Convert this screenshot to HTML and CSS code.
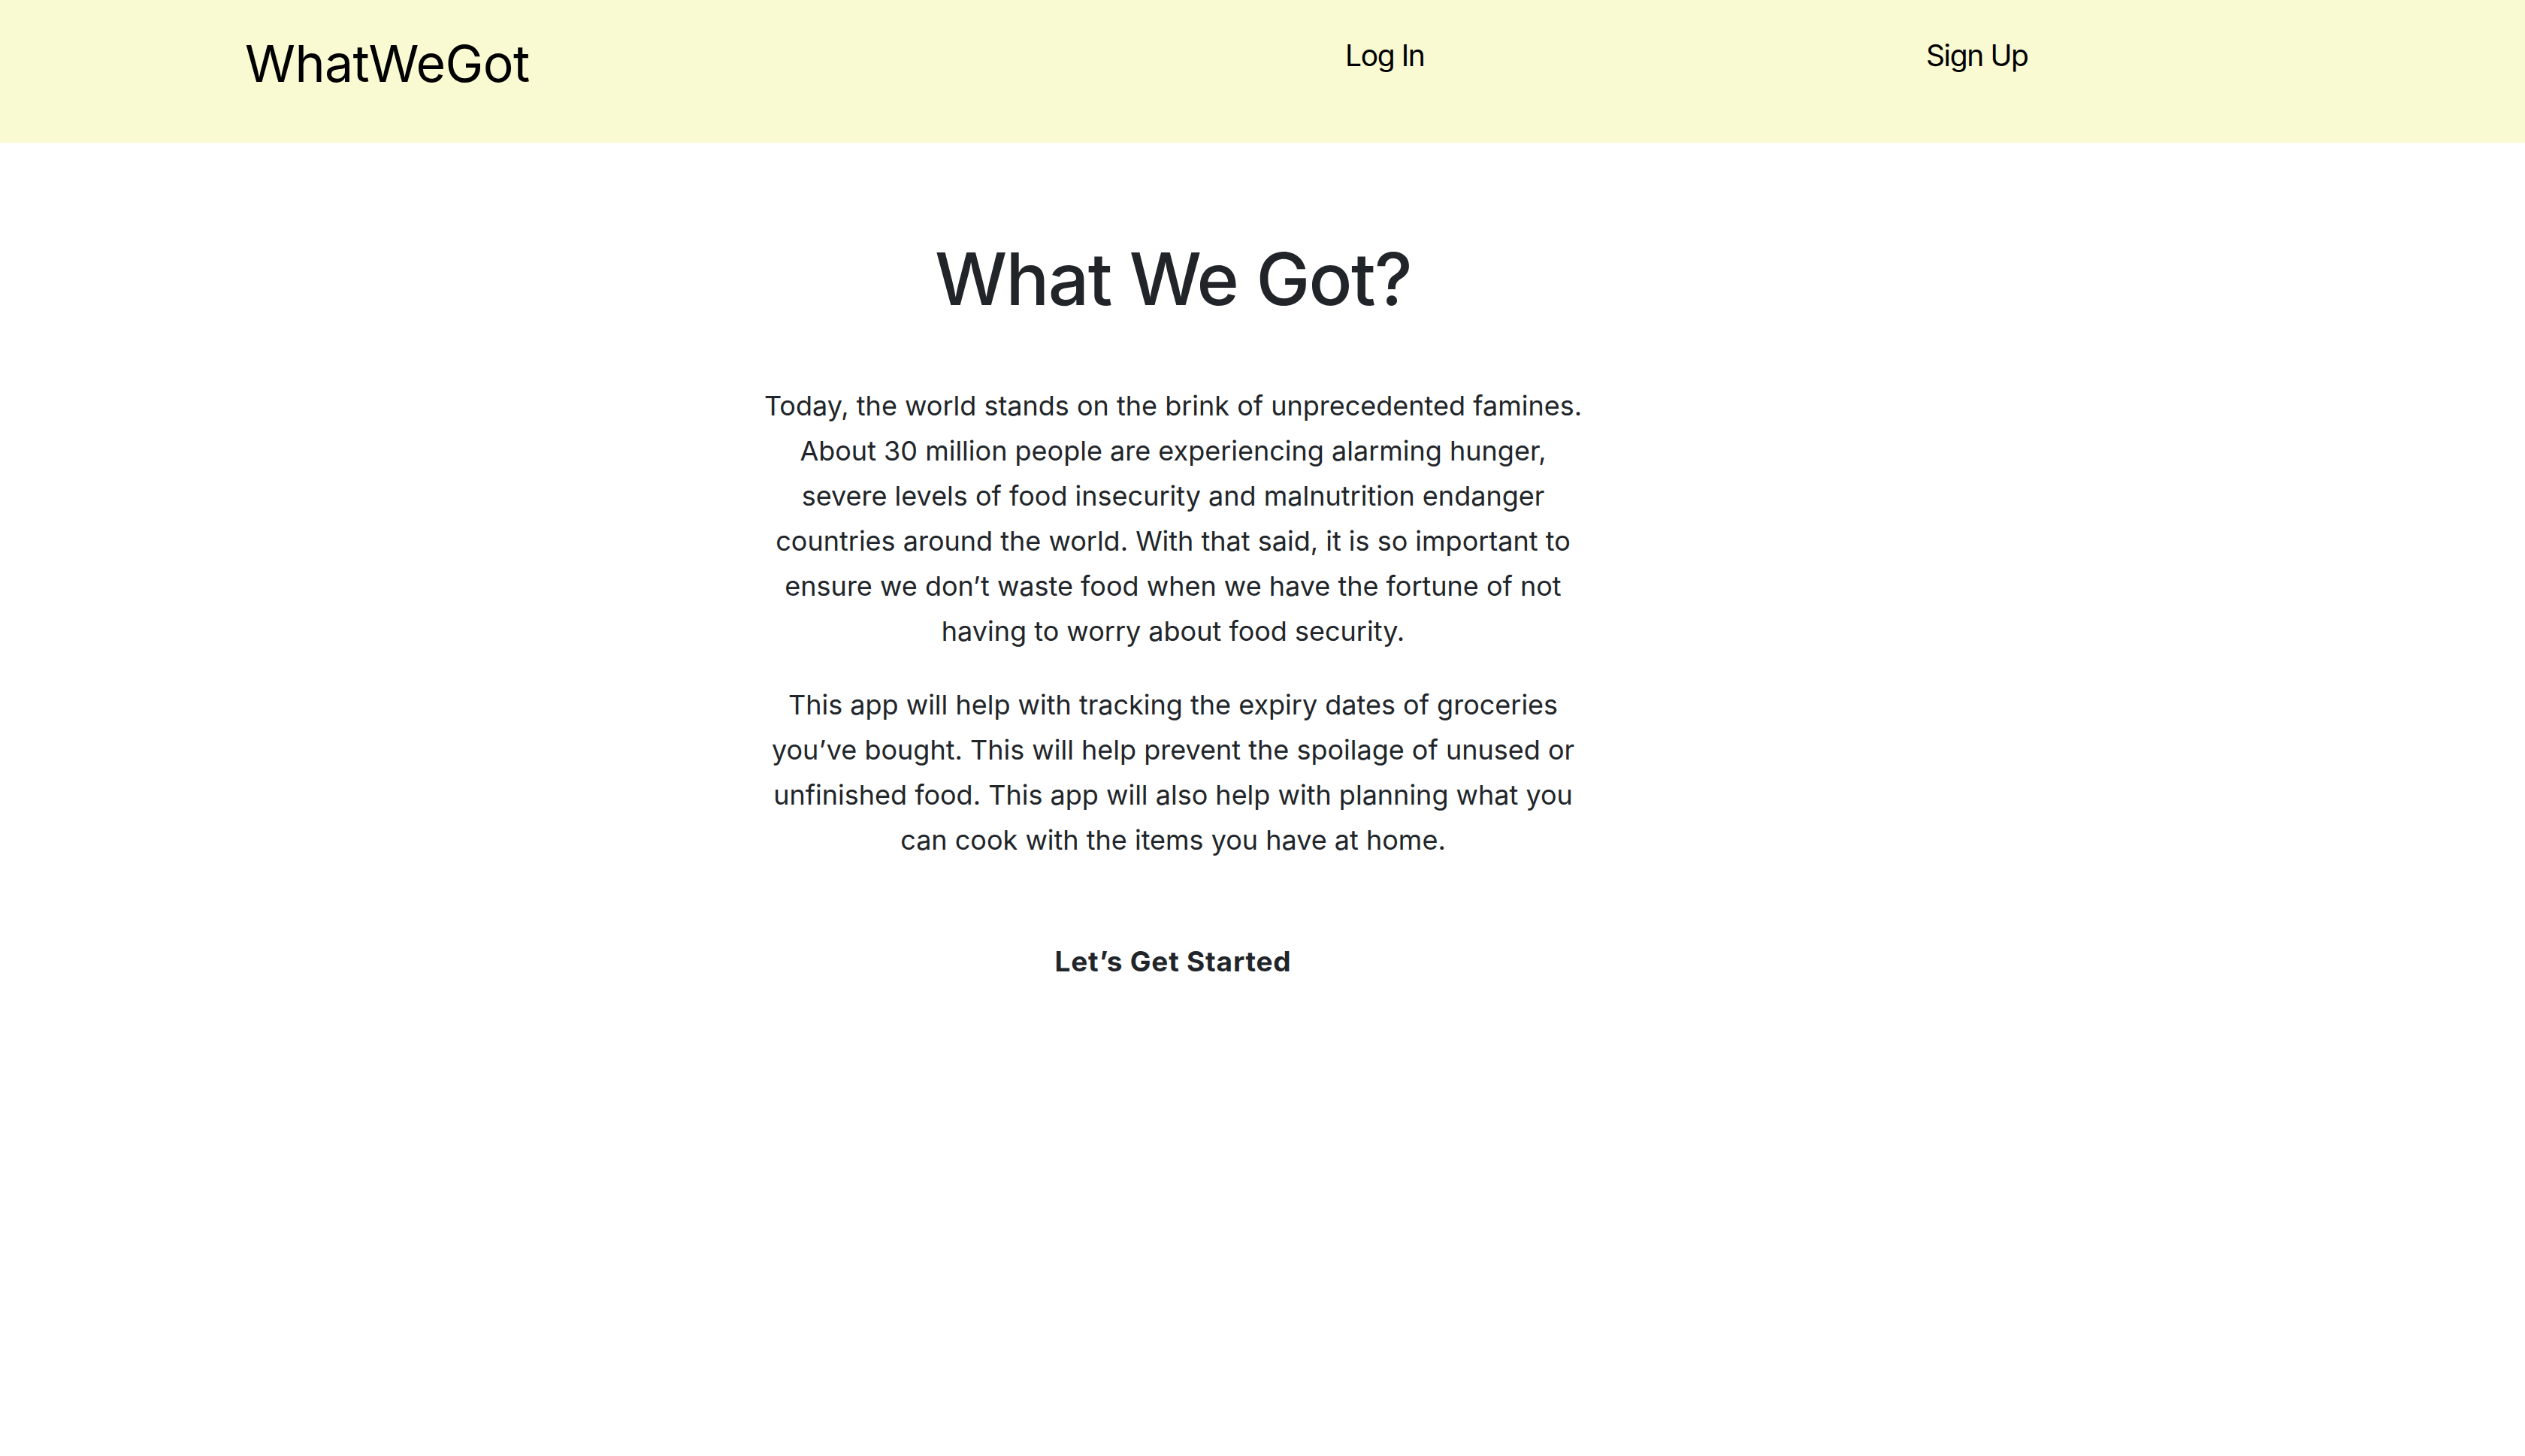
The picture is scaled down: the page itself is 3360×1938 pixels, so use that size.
FILE: index.html
```html
<!DOCTYPE html>
<html lang="en">
<head>
<meta charset="utf-8">
<title>WhatWeGot</title>
<link rel="stylesheet" href="styles.css">
</head>
<body>
<header class="navbar">
  <div class="container nav-grid">
    <a class="brand" href="#">WhatWeGot</a>
    <a class="nav-link" href="#">Log In</a>
    <a class="nav-link" href="#">Sign Up</a>
  </div>
</header>
<main class="container main">
  <h1 class="title">What We Got?</h1>
  <div class="intro">
    <p>Today, the world stands on the brink of unprecedented famines. About 30 million people are experiencing alarming hunger, severe levels of food insecurity and malnutrition endanger countries around the world. With that said, it is so important to ensure we don’t waste food when we have the fortune of not having to worry about food security.</p>
    <p>This app will help with tracking the expiry dates of groceries you’ve bought. This will help prevent the spoilage of unused or unfinished food. This app will also help with planning what you can cook with the items you have at home.</p>
  </div>
  <a class="start" href="#">Let’s Get Started</a>
</main>
</body>
</html>
```
FILE: styles.css
```css
html, body {
  margin: 0;
  padding: 0;
  background: #ffffff;
}
body {
  font-family: Inter, "Noto Sans", sans-serif;
  color: #212529;
}
a {
  text-decoration: none;
  color: inherit;
}
.container {
  width: 2470px;
  margin-left: 326px;
}
.navbar {
  background: #fafad2;
  height: 190px;
  box-sizing: border-box;
  padding-top: 44px;
}
.nav-grid {
  display: grid;
  grid-template-columns: 1464px 773px auto;
  align-items: start;
}
.brand {
  font-size: 68px;
  line-height: 1.2;
  color: #000;
  letter-spacing: -0.6px;
}
.nav-link {
  font-size: 39px;
  line-height: 1.2;
  color: #000;
  margin-top: 7px;
  letter-spacing: -1.4px;
}
.main {
  display: flex;
  flex-direction: column;
  align-items: center;
  text-align: center;
}
.title {
  margin: 124px 0 0;
  font-size: 96px;
  line-height: 1.2;
  font-weight: 500;
  letter-spacing: -1.6px;
}
.intro {
  width: 1096px;
  margin-top: 81px;
}
.intro p {
  margin: 0 0 38px;
  font-size: 36px;
  line-height: 60px;
  letter-spacing: 0;
}
.start {
  margin-top: 64px;
  font-size: 37px;
  line-height: 60px;
  font-weight: 700;
  letter-spacing: 0.8px;
}
```
